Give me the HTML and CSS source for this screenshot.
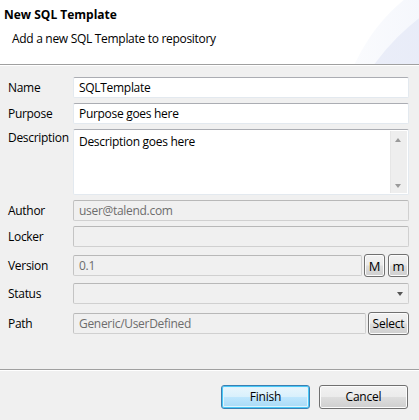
FILE: index.html
```html
<!DOCTYPE html>
<html>
<head>
<meta charset="utf-8">
<link rel="stylesheet" href="styles.css">
</head>
<body>
<div class="dialog">
  <div class="header">
    <div class="header-text">
      <div class="title">New SQL Template</div>
      <div class="subtitle">Add a new SQL Template to repository</div>
    </div>
    <svg class="swoosh" width="75" height="64" viewBox="0 0 75 64" aria-hidden="true">
      <defs>
        <linearGradient id="gOuter" x1="0" y1="0" x2="1" y2="0">
          <stop offset="0" stop-color="#fbfcfe"/>
          <stop offset="0.5" stop-color="#eef1fa"/>
          <stop offset="1" stop-color="#e6eaf8"/>
        </linearGradient>
        <linearGradient id="gInner" x1="0" y1="0" x2="1" y2="0">
          <stop offset="0" stop-color="#eceff9"/>
          <stop offset="1" stop-color="#dae0f4"/>
        </linearGradient>
      </defs>
      <circle cx="176" cy="140" r="182" fill="url(#gOuter)"/>
      <circle cx="216" cy="200" r="230" fill="url(#gInner)"/>
    </svg>
  </div>
  <div class="form">
    <div class="row">
      <label class="lbl">Name</label>
      <div class="field"><div class="input">SQLTemplate</div></div>
    </div>
    <div class="row">
      <label class="lbl">Purpose</label>
      <div class="field"><div class="input">Purpose goes here</div></div>
    </div>
    <div class="row top">
      <label class="lbl lbl-top">Description</label>
      <div class="field">
        <div class="input textarea">
          <span class="ta-text">Description goes here</span>
          <div class="vscroll">
            <span class="arrow up"></span>
            <span class="arrow down"></span>
          </div>
        </div>
      </div>
    </div>
    <div class="row">
      <label class="lbl">Author</label>
      <div class="field"><div class="input disabled">user@talend.com</div></div>
    </div>
    <div class="row">
      <label class="lbl">Locker</label>
      <div class="field"><div class="input disabled"></div></div>
    </div>
    <div class="row r-version">
      <label class="lbl">Version</label>
      <div class="field with-btns">
        <div class="input disabled grow">0.1</div>
        <button class="btn small">M</button>
        <button class="btn small">m</button>
      </div>
    </div>
    <div class="row r-status">
      <label class="lbl">Status</label>
      <div class="field"><div class="input disabled combo"><span class="combo-arrow"></span></div></div>
    </div>
    <div class="row r-path">
      <label class="lbl">Path</label>
      <div class="field with-btns">
        <div class="input disabled grow">Generic/UserDefined</div>
        <button class="btn select">Select</button>
      </div>
    </div>
  </div>
  <div class="footer">
    <button class="btn big default">Finish</button>
    <button class="btn big">Cancel</button>
  </div>
</div>
</body>
</html>
```
FILE: styles.css
```css
html, body {
  margin: 0;
  padding: 0;
}
body {
  width: 419px;
  height: 420px;
  background: #f0f0f0;
  font-family: "Open Sans", "Noto Sans", sans-serif;
  font-size: 12px;
  color: #000;
  overflow: hidden;
}
.dialog {
  width: 419px;
  height: 420px;
  display: flex;
  flex-direction: column;
}
.header {
  height: 64px;
  background: #ffffff;
  border-bottom: 1px solid #a0a0a0;
  box-shadow: 0 1px 0 #fff;
  flex: none;
  display: flex;
  justify-content: space-between;
  overflow: hidden;
}
.header-text {
  flex: 1;
}
.swoosh {
  display: block;
  flex: none;
}
.title {
  font-weight: bold;
  font-size: 12px;
  padding: 7px 0 0 4px;
  line-height: 16px;
}
.subtitle {
  padding: 8px 0 0 12px;
  line-height: 16px;
  letter-spacing: -0.3px;
}
.form {
  padding: 12px 10px 0 8px;
  display: flex;
  flex-direction: column;
  gap: 5px;
  flex: 1;
}
.row {
  display: flex;
  align-items: center;
}
.row.top {
  align-items: flex-start;
}
.lbl {
  width: 65px;
  flex: none;
  line-height: 16px;
  letter-spacing: -0.3px;
}
.lbl-top {
  padding-top: 1px;
}
.field {
  flex: 1;
  display: flex;
  align-items: center;
}
.input {
  box-sizing: border-box;
  flex: 1;
  height: 21px;
  background: #fff;
  border: 1px solid #e3e9ef;
  border-top-color: #abadb3;
  border-radius: 2px;
  padding: 1px 5px 0 5px;
  line-height: 17px;
  letter-spacing: -0.3px;
  white-space: nowrap;
}
.textarea {
  position: relative;
  height: 66px;
  padding-top: 3px;
}
.vscroll {
  position: absolute;
  right: 1px;
  top: 1px;
  bottom: 1px;
  width: 16px;
  background: #eeeeee;
  border-left: 1px solid #e6e6e6;
}
.arrow {
  position: absolute;
  left: 4px;
  width: 0;
  height: 0;
  border-left: 3.5px solid transparent;
  border-right: 3.5px solid transparent;
}
.arrow.up {
  top: 7px;
  border-bottom: 4px solid #9a9a9a;
}
.arrow.down {
  bottom: 5px;
  border-top: 4px solid #9a9a9a;
}
.disabled {
  background: #f0f0f0;
  border: 1px solid #b7b7b7;
  border-color: #b8b8b8 #d0d0d0 #d0d0d0 #c4c4c4;
  color: #6d6d6d;
}
.combo {
  position: relative;
}
.combo-arrow {
  position: absolute;
  right: 5px;
  top: 8px;
  width: 0;
  height: 0;
  border-left: 3.5px solid transparent;
  border-right: 3.5px solid transparent;
  border-top: 4px solid #555;
}
.with-btns {
  gap: 2px;
}
.grow {
  flex: 1;
}
.r-version {
  margin-top: 2px;
}
.r-status {
  margin-top: 1px;
}
.r-path {
  margin-top: 3px;
}
.btn {
  box-sizing: border-box;
  font-family: inherit;
  font-size: 12px;
  color: #000;
  border: 1px solid #707070;
  border-radius: 3px;
  background: linear-gradient(#f2f2f2 0%, #ebebeb 48%, #dddddd 52%, #cfcfcf 100%);
  box-shadow: inset 0 0 0 1px #fcfcfc;
  padding: 0;
  margin: 0;
  line-height: 16px;
  flex: none;
  letter-spacing: -0.2px;
}
.small {
  width: 21px;
  height: 23px;
  font-size: 13px;
}
.small + .small {
  margin-left: 1px;
}
.select {
  width: 41px;
  height: 23px;
  font-size: 12px;
}
.footer {
  flex: none;
  height: 51px;
  border-top: 1px solid #a0a0a0;
  box-shadow: inset 0 1px 0 #fff;
  display: flex;
  justify-content: flex-end;
  align-items: flex-start;
  padding: 15px 11px 0 0;
  gap: 9px;
  box-sizing: border-box;
}
.big {
  width: 89px;
  height: 24px;
}
.default {
  border-color: #3c7fb1;
  background: linear-gradient(#eaf6fd 0%, #d9f0fc 48%, #bee6fd 52%, #a7d9f5 100%);
  box-shadow: inset 0 0 0 1px #48c8f8, inset 0 0 0 2px #e0f4fc;
}
```
